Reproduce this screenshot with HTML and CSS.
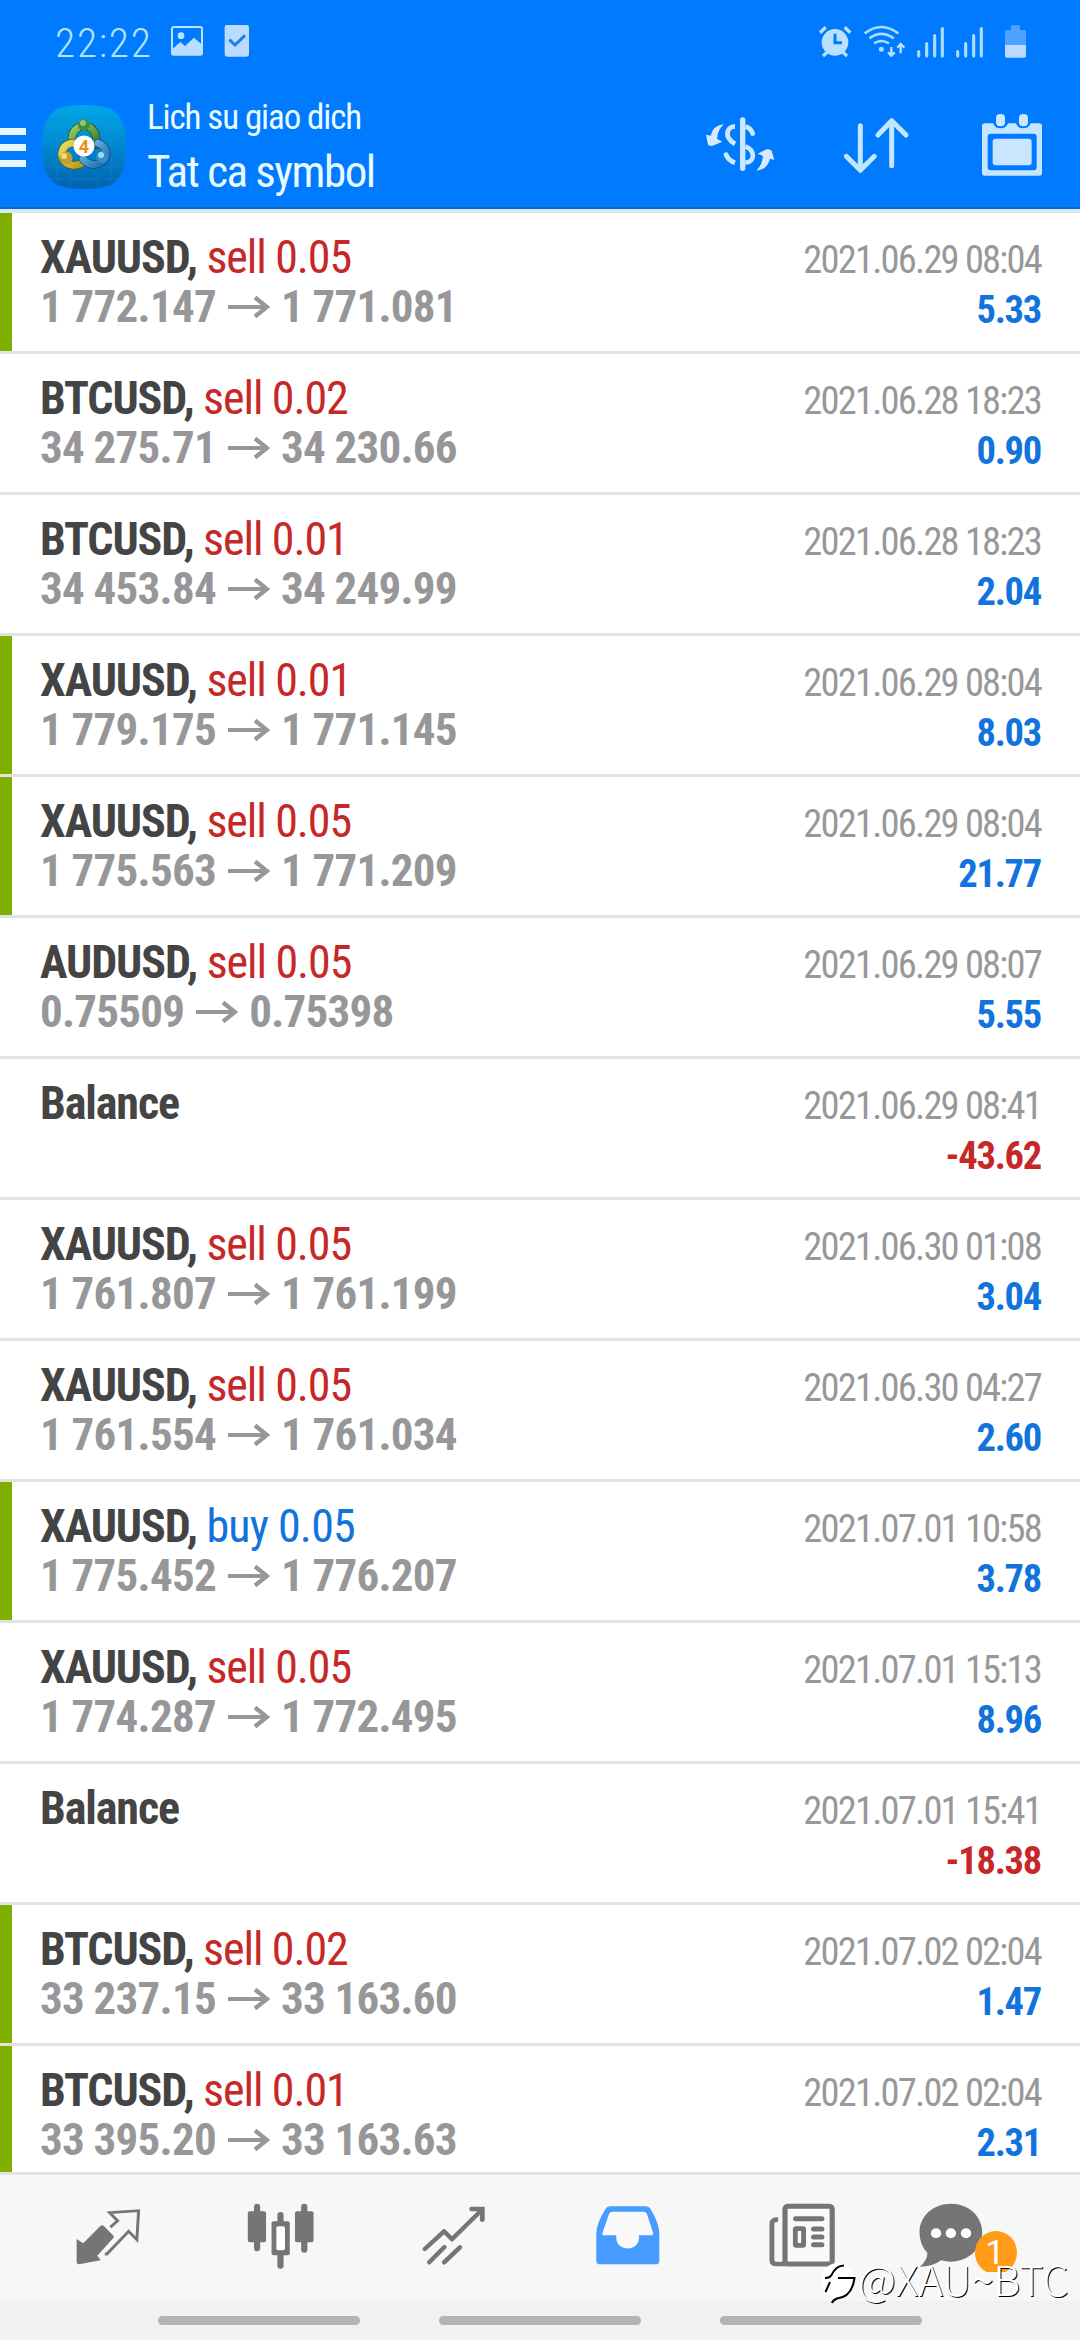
FILE: index.html
```html
<!DOCTYPE html>
<html lang="vi">
<head>
<meta charset="utf-8">
<title>Lich su giao dich</title>
<link rel="stylesheet" href="styles.css">
</head>
<body>
<svg class="defs" width="0" height="0"><defs>
<symbol id="arrow" viewBox="0 0 42 24"><path d="M0 12H38M27 2.5L39 12L27 21.5" fill="none" stroke="currentColor" stroke-width="4.2"/></symbol>
<symbol id="signal" viewBox="708 72 87 105"><path d="M716 155V168M740 131V168M764 107V168M787 86V168" fill="none" stroke="#a9dcff" stroke-width="9.5" stroke-linecap="round"/></symbol>
</defs></svg>
<div class="screen">
<header class="header">
  <div class="status">
    <span class="clock">22:22</span>
    <svg class="st-image" viewBox="510 72 102 105"><rect x="516" y="81" width="90" height="83" rx="5" fill="none" stroke="#b9e2ff" stroke-width="6"/><circle cx="543" cy="107" r="10" fill="#b9e2ff"/><path d="M518 146L541 126L555 138L582 113L604 132V163H518Z" fill="#b9deff"/></svg>
    <svg class="st-check" viewBox="672 72 78 105"><rect x="674" y="75" width="73" height="95" rx="7" fill="#b9dbff"/><path d="M688 119L705 135L735 106" fill="none" stroke="#1a7de8" stroke-width="9"/></svg>
    <span class="spacer"></span>
    <svg class="st-alarm" viewBox="414 72 102 105"><circle cx="465" cy="127" r="40" fill="#b9e0ff"/><path d="M420 98L437 82M511 98L494 82M429 168L443 155M501 168L487 155" stroke="#b9e0ff" stroke-width="10"/><path d="M465 101V128H486" fill="none" stroke="#007aff" stroke-width="9"/></svg>
    <svg class="st-wifi" viewBox="549 72 129 105"><path d="M554 100Q604 62 655 100M568 115Q604 88 641 115M582 130Q604 116 627 130" fill="none" stroke="#a9dcff" stroke-width="8"/><circle cx="604" cy="148" r="7.500" fill="#a9dcff"/><path d="M634 141V166M624 157L634 167L644 157M662 160V133M652 143L662 132L673 143" fill="none" stroke="#b9e0ff" stroke-width="7"/></svg>
    <svg class="st-signal"><use href="#signal"/></svg>
    <svg class="st-signal"><use href="#signal"/></svg>
    <svg class="st-battery" viewBox="972 72 69 105"><path d="M975 135V94Q975 90 980 90H993V76H1020V90H1033Q1038 90 1038 94V135Z" fill="#4da3ff"/><path d="M975 135H1038V168Q1038 173 1033 173H980Q975 173 975 168Z" fill="#b9dbff"/></svg>
  </div>
  <div class="bar">
    <div class="menu"><i></i><i></i><i></i></div>
    <svg class="logo" viewBox="0 0 84 84">
      <defs>
        <linearGradient id="bg" x2="0" y2="1"><stop stop-color="#00a7e8"/><stop offset=".5" stop-color="#0287cf"/><stop offset="1" stop-color="#0063ae"/></linearGradient>
        <linearGradient id="gr" x2="1" y2="1"><stop stop-color="#9ccb62"/><stop offset="1" stop-color="#2d7c2a"/></linearGradient>
        <linearGradient id="ye" x2="1" y2="1"><stop stop-color="#e8dd5e"/><stop offset="1" stop-color="#b79a20"/></linearGradient>
        <linearGradient id="bl" x2="1" y2="1"><stop stop-color="#7cc3ee"/><stop offset="1" stop-color="#1668ae"/></linearGradient>
      </defs>
      <path d="M42 0C74 0 84 10 84 42S74 84 42 84S0 74 0 42S10 0 42 0Z" fill="url(#bg)"/>
      <path d="M15 8V76M28 2V82M56 2V82M69 8V76M4 22H80M2 35H82M2 62H82M8 74H76" stroke="#3aa9de" stroke-width=".7" opacity=".25"/>
      <g fill="none" stroke-linecap="round">
        <path d="M30 36C29 26 36 21 42 21C50 21 56 28 54 40" stroke="#1d5133" stroke-width="8.500"/><path d="M30 36C29 26 36 21 42 21C50 21 56 28 54 40" stroke="url(#gr)" stroke-width="7"/>
        <path d="M32 38C21 38 18 48 21 54C25 61 34 62 40 58" stroke="#4f5520" stroke-width="8.500"/><path d="M32 38C21 38 18 48 21 54C25 61 34 62 40 58" stroke="url(#ye)" stroke-width="7"/>
        <path d="M56 38C66 42 67 53 60 57C53 62 45 59 41 54" stroke="#0c4a80" stroke-width="8.500"/><path d="M56 38C66 42 67 53 60 57C53 62 45 59 41 54" stroke="url(#bl)" stroke-width="7"/>
      </g>
      <circle cx="42" cy="20" r="6" fill="#3f9040"/><circle cx="41" cy="18" r="3" fill="#8bc779"/>
      <circle cx="24" cy="53" r="6.500" fill="#c0a22b"/><circle cx="22" cy="51" r="3" fill="#f0df72"/>
      <circle cx="60" cy="52" r="6" fill="#368cc9"/><circle cx="59" cy="50" r="3" fill="#9cdaf8"/>
      <circle cx="42" cy="41" r="10.500" fill="#fff"/>
      <text x="42" y="47.500" text-anchor="middle" class="logo-num">4</text>
    </svg>
    <div class="titles"><div class="subtitle"><span>Lich su giao dich</span></div><div class="title"><span>Tat ca symbol</span></div></div>
    <div class="actions">
      <svg class="act-currency" viewBox="72 336 216 198"><path d="M188 360V505" stroke="#cde8ff" stroke-width="16" stroke-linecap="round"/><path d="M165 379C142 380 138 402 146 414Q151 423 165 432M196 380Q212 383 218 400M196 439C225 450 227 486 196 488M165 488Q145 482 138 463" fill="none" stroke="#cde8ff" stroke-width="14"/><circle cx="218" cy="401" r="7" fill="#cde8ff"/><circle cx="138" cy="464" r="7" fill="#cde8ff"/><path d="M132 373Q99 376 92 407L78 404L84 434Q88 438 96 438L127 425L111 416Q113 389 132 373ZM229 512Q263 508 270 476L283 480L275 452Q269 446 260 448L233 461L249 468Q247 494 229 512Z" fill="#d5eaff"/></svg>
      <svg class="act-sort" viewBox="486 336 210 198"><path d="M541 377V510M499 469L541 511L583 469M635 497V362M594 405L635 362L678 405" fill="none" stroke="#c3e6ff" stroke-width="15" stroke-linecap="round" stroke-linejoin="round"/></svg>
      <svg class="act-calendar" viewBox="894 336 198 198"><path fill-rule="evenodd" d="M914 370H940Q943 385 961 385Q980 385 984 370H1008Q1012 385 1030 385Q1048 385 1052 370H1078Q1086 370 1086 378V519Q1086 527 1078 527H914Q906 527 906 519V378Q906 370 914 370ZM932 401Q923 401 923 410V502Q923 511 932 511H1061Q1070 511 1070 502V410Q1070 401 1061 401Z" fill="#c6e6ff"/><rect x="938" y="416" width="117" height="80" rx="9" fill="#cce5ff"/><rect x="948" y="342" width="27" height="37" rx="12" fill="#cbe7ff"/><rect x="1017" y="342" width="27" height="37" rx="12" fill="#cbe7ff"/></svg>
    </div>
  </div>
</header>
<main class="list">
<div class="row open"><div class="deal"><b>XAUUSD,</b> <span class="sell">sell 0.05</span></div><time>2021.06.29 08:04</time><div class="price">1 772.147<svg><use href="#arrow"/></svg>1 771.081</div><div class="profit">5.33</div></div>
<div class="row"><div class="deal"><b>BTCUSD,</b> <span class="sell">sell 0.02</span></div><time>2021.06.28 18:23</time><div class="price">34 275.71<svg><use href="#arrow"/></svg>34 230.66</div><div class="profit">0.90</div></div>
<div class="row"><div class="deal"><b>BTCUSD,</b> <span class="sell">sell 0.01</span></div><time>2021.06.28 18:23</time><div class="price">34 453.84<svg><use href="#arrow"/></svg>34 249.99</div><div class="profit">2.04</div></div>
<div class="row open"><div class="deal"><b>XAUUSD,</b> <span class="sell">sell 0.01</span></div><time>2021.06.29 08:04</time><div class="price">1 779.175<svg><use href="#arrow"/></svg>1 771.145</div><div class="profit">8.03</div></div>
<div class="row open"><div class="deal"><b>XAUUSD,</b> <span class="sell">sell 0.05</span></div><time>2021.06.29 08:04</time><div class="price">1 775.563<svg><use href="#arrow"/></svg>1 771.209</div><div class="profit">21.77</div></div>
<div class="row"><div class="deal"><b>AUDUSD,</b> <span class="sell">sell 0.05</span></div><time>2021.06.29 08:07</time><div class="price">0.75509<svg><use href="#arrow"/></svg>0.75398</div><div class="profit">5.55</div></div>
<div class="row"><div class="deal"><b>Balance</b></div><time>2021.06.29 08:41</time><div class="price"></div><div class="profit loss">-43.62</div></div>
<div class="row"><div class="deal"><b>XAUUSD,</b> <span class="sell">sell 0.05</span></div><time>2021.06.30 01:08</time><div class="price">1 761.807<svg><use href="#arrow"/></svg>1 761.199</div><div class="profit">3.04</div></div>
<div class="row"><div class="deal"><b>XAUUSD,</b> <span class="sell">sell 0.05</span></div><time>2021.06.30 04:27</time><div class="price">1 761.554<svg><use href="#arrow"/></svg>1 761.034</div><div class="profit">2.60</div></div>
<div class="row open"><div class="deal"><b>XAUUSD,</b> <span class="buy">buy 0.05</span></div><time>2021.07.01 10:58</time><div class="price">1 775.452<svg><use href="#arrow"/></svg>1 776.207</div><div class="profit">3.78</div></div>
<div class="row"><div class="deal"><b>XAUUSD,</b> <span class="sell">sell 0.05</span></div><time>2021.07.01 15:13</time><div class="price">1 774.287<svg><use href="#arrow"/></svg>1 772.495</div><div class="profit">8.96</div></div>
<div class="row"><div class="deal"><b>Balance</b></div><time>2021.07.01 15:41</time><div class="price"></div><div class="profit loss">-18.38</div></div>
<div class="row open"><div class="deal"><b>BTCUSD,</b> <span class="sell">sell 0.02</span></div><time>2021.07.02 02:04</time><div class="price">33 237.15<svg><use href="#arrow"/></svg>33 163.60</div><div class="profit">1.47</div></div>
<div class="row open"><div class="deal"><b>BTCUSD,</b> <span class="sell">sell 0.01</span></div><time>2021.07.02 02:04</time><div class="price">33 395.20<svg><use href="#arrow"/></svg>33 163.63</div><div class="profit">2.31</div></div>
</main>
<nav class="tabs">
  <svg preserveAspectRatio="none" viewBox="204.700 119 217.800 217.800"><path d="M221 236L240 249L290 197Q295 193 300 197L328 226Q331 230 327 234L281 286L291 300L228 312Q221 312 221 305Z" fill="#757575"/><path d="M319 201L340 181L317 157L401 151L396 238L372 213L309 281H303" fill="none" stroke="#757575" stroke-width="8.500"/></svg>
  <svg preserveAspectRatio="none" viewBox="707 119 217.800 217.800"><path d="M745 139V264M813 164V184M813 284V316M882 139V268" stroke="#757575" stroke-width="18" stroke-linecap="round"/><rect x="718" y="153" width="53" height="93" rx="6" fill="#757575"/><rect x="855" y="153" width="54" height="93" rx="6" fill="#757575"/><rect x="787" y="183" width="53" height="102" rx="6" fill="#757575"/><rect x="801" y="198" width="25" height="72" rx="6" fill="#fff"/></svg>
  <svg preserveAspectRatio="none" viewBox="1209.400 119 217.800 217.800"><g fill="none" stroke="#757575" stroke-width="13" stroke-linecap="round" stroke-linejoin="round"><path d="M1232 266L1288 213L1311 237L1395 151M1245 306L1289 260M1288 306L1334 261"/><path d="M1368 146H1399V178" stroke-width="14" stroke-linejoin="miter"/></g></svg>
  <svg preserveAspectRatio="none" viewBox="143.700 119 217.800 217.800"><path d="M202 138H305Q315 138 320 147Q345 190 345 222V301Q345 312 334 312H173Q162 312 162 301V222Q162 190 188 147Q193 138 202 138Z" fill="#469cff"/><path d="M210 154H298Q306 154 309 161L327 217Q329 225 320 225H286V232C286 275 220 275 220 232V225H186Q177 225 180 217L199 161Q202 154 210 154Z" fill="#fafafa"/></svg>
  <svg preserveAspectRatio="none" viewBox="646.100 119 217.800 217.800"><rect x="710" y="138" width="137" height="173" rx="8" fill="#fafafa" stroke="#757575" stroke-width="15"/><path d="M690 178Q672 177 672 190V299Q672 311 684 311H712" fill="none" stroke="#757575" stroke-width="14"/><path d="M741 175H817M793 206H817M793 230H817M793 253H817" stroke="#757575" stroke-width="15" stroke-linecap="round"/><rect x="740" y="205" width="24" height="50" rx="2" fill="#fafafa" stroke="#757575" stroke-width="14"/></svg>
  <svg preserveAspectRatio="none" class="wide" viewBox="1097.600 119 319.400 217.800"><path d="M1193 130C1245 130 1284 168 1284 216S1245 304 1193 304Q1179 304 1165 300Q1140 319 1103 319Q1124 301 1125 278Q1102 254 1102 216C1102 168 1141 130 1193 130Z" fill="#757575"/><g fill="#fff"><circle cx="1150" cy="219" r="15"/><circle cx="1193" cy="219" r="15"/><circle cx="1237" cy="219" r="15"/></g><ellipse cx="1324" cy="277" rx="61" ry="65" fill="#ff9b17"/><text x="1321" y="312" text-anchor="middle" class="badge-num">1</text></svg>
</nav>
<div class="gestures"><i></i><i></i><i></i></div>
<div class="watermark"><svg viewBox="0 0 36 44"><circle cx="18" cy="19" r="17" fill="#fff"/><path d="M5 17Q10 17 11.500 14Q16 4.500 24 4.500M18 17H34.500Q32 36 17 37.500Q13 39 12 42M10 21L5.500 31" fill="none" stroke="#000" stroke-width="2"/></svg><span>@XAU~BTC</span></div>
</div>
</body>
</html>
```
FILE: styles.css
```css
* { box-sizing: border-box; }
body { margin: 0; font-family: "Roboto Condensed", Roboto, sans-serif; font-stretch: 75%; }
svg { display: block; flex: none; }
.defs { position: absolute; }
.screen { position: relative; width: 1080px; height: 2340px; display: flex; flex-direction: column; overflow: hidden; background: #fff; }

.header { height: 213px; flex: none; background: #007aff; border-bottom: 4px solid #d4eaf6; box-shadow: inset 0 -2px #1269bd; display: flex; flex-direction: column; }
.status { height: 84px; padding: 24px 53px 0 55px; display: flex; align-items: flex-start; }
.status svg { height: 35px; }
.clock { width: 115px; font-size: 41.500px; line-height: 38px; letter-spacing: 1.700px; font-stretch: 100%; font-weight: 340; color: #b5e3ff; }
.st-image { width: 34px; }
.st-check { width: 26px; margin-left: 20px; }
.spacer { flex: 1; }
.st-alarm { width: 34px; }
.st-wifi { width: 43px; margin-left: 11px; }
.st-signal { width: 29px; margin-left: 10px; }
.st-battery { width: 23px; margin-left: 20px; }

.bar { flex: 1; display: flex; align-items: flex-start; padding-right: 36px; }
.menu { width: 26px; margin: 44px 16px 0 0; display: grid; gap: 9px; }
.menu i { height: 7px; background: #e6f8ff; }
.logo { width: 84px; height: 84px; margin-top: 21px; }
.logo-num { font: bold 18px Roboto, sans-serif; fill: #f08a1c; }
.titles { margin: 13px auto 0 21px; color: #e9faff; white-space: nowrap; }
.subtitle { font-size: 35px; line-height: 42px; letter-spacing: -1.100px; }
.title { font-size: 45px; line-height: 54px; margin-top: 6px; letter-spacing: -1.500px; }
.actions { display: flex; gap: 66px; margin-top: 28px; }
.actions svg { height: 66px; }
.act-currency { width: 72px; }
.act-sort { width: 70px; }
.act-calendar { width: 66px; }

.list { height: 1959px; flex: none; overflow: hidden; }
.row { height: 141px; border-bottom: 3px solid #e2e2e2; padding: 19px 39px 0 40px; display: grid; grid-template-columns: 1fr auto; grid-template-rows: 50px 50px; align-items: start; white-space: nowrap; position: relative; }
.row.open::before { content: ""; position: absolute; left: 0; top: 0; width: 12px; height: 138px; background: #7fb000; }
.deal { font-size: 46px; line-height: 50px; color: #444; letter-spacing: -1.100px; }
.sell { color: #c62828; }
.buy { color: #1173dc; letter-spacing: -.800px; }
.price { font-size: 45px; line-height: 50px; font-weight: 700; letter-spacing: -.750px; color: #97979a; display: flex; align-items: center; }
.price svg { width: 42px; height: 24px; margin: 0 11px 0 12px; }
time { font-size: 38.500px; line-height: 50px; padding-top: 3px; letter-spacing: -1.780px; color: #98989a; text-align: right; }
.profit { font-size: 38.500px; line-height: 50px; padding-top: 3px; font-weight: 700; letter-spacing: -1.250px; color: #1173dc; text-align: right; }
.profit.loss { color: #c62828; }

.tabs { height: 129px; flex: none; background: #f7f7f7; border-top: 3px solid #e2e2e2; padding: 24.700px 20px 0 21.500px; display: grid; grid-template-columns: repeat(6, 173px); justify-items: center; }
.tabs svg { width: 75px; height: 72.600px; }
.tabs .wide { width: 110px; }
.badge-num { font: 100px "Roboto", sans-serif; fill: #fff; }
.gestures { flex: 1; background: #f1f1f1; display: flex; gap: 79px; padding: 15px 0 0 158px; }
.gestures i { width: 202px; height: 9px; border-radius: 5px; background: #b4b4b4; }
.watermark { position: absolute; left: 820px; top: 2256px; display: flex; align-items: center; height: 44px; font: 300 41.500px/44px "Noto Sans CJK SC", sans-serif; color: #fff; text-shadow: 1px 1px 0 #000; }
.watermark svg { width: 36px; height: 44px; margin: 10px 2px 0 0; }
```
